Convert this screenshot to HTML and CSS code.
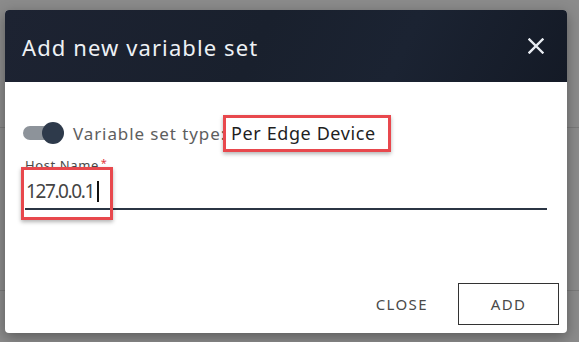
FILE: index.html
```html
<!DOCTYPE html>
<html lang="en">
<head>
    <meta charset="UTF-8">
    <meta name="viewport" content="width=device-width, initial-scale=1.0">
    <title>Add new variable set</title>
    <link rel="stylesheet" href="styles.css">
</head>
<body>

    <!-- Page derrière le voile -->
    <div class="backdrop">
        <div class="bg-line bg-line-top"></div>
        <div class="bg-line bg-line-bottom"></div>
    </div>

    <div class="dialog">
        <div class="dialog-header">
            <h2 class="dialog-title">Add new variable set</h2>
            <button class="close-btn" aria-label="Close">
                <svg width="16" height="16" viewBox="0 0 16 16">
                    <path d="M1.5 1.5 L14.5 14.5 M14.5 1.5 L1.5 14.5" stroke="#e8ecf2" stroke-width="2.4" stroke-linecap="square"/>
                </svg>
            </button>
        </div>

        <div class="dialog-body">
            <div class="type-row">
                <span class="toggle"><span class="toggle-knob"></span></span>
                <span class="type-label">Variable set type:</span>
                <span class="type-value">Per Edge Device</span>
            </div>

            <div class="field">
                <label class="field-label">Host Name<span class="required">*</span></label>
                <div class="field-input">127.0.0.1<span class="caret"></span></div>
                <div class="highlight-box"></div>
            </div>
        </div>

        <div class="dialog-actions">
            <button class="btn btn-text">CLOSE</button>
            <button class="btn btn-outline">ADD</button>
        </div>
    </div>

</body>
</html>
```

FILE: styles.css
```css
/* Style de la page */
body {
    margin: 0;
    padding: 0;
    background-color: #8b8b8b;
    font-family: "Noto Sans", "Open Sans", sans-serif;
    height: 342px;
    overflow: hidden;
    position: relative;
}

.backdrop {
    position: absolute;
    inset: 0;
}

.bg-line {
    position: absolute;
    left: 0;
    right: 0;
    height: 1px;
    background-color: #7a7a7a;
}

.bg-line-top {
    top: 127px;
}

.bg-line-bottom {
    top: 290px;
}

/* Fenêtre de dialogue */
.dialog {
    position: relative;
    margin: 10px 12px 0 5px;
    height: 323px;
    background-color: #fff;
    border-radius: 4px;
    box-shadow: 0 4px 14px rgba(0, 0, 0, 0.35);
    display: flex;
    flex-direction: column;
    overflow: hidden;
}

.dialog-header {
    height: 72px;
    background: linear-gradient(115deg, #1d2332 0%, #19202d 45%, #1b2332 70%, #141a26 100%);
    display: flex;
    align-items: center;
    justify-content: space-between;
    padding: 0 22px 0 17px;
    flex-shrink: 0;
}

.dialog-title {
    margin: 0;
    margin-top: 2px;
    font-size: 22px;
    font-weight: 400;
    color: #eef1f5;
    letter-spacing: 1.1px;
}

.close-btn {
    background: none;
    border: none;
    padding: 0;
    width: 18px;
    height: 18px;
    display: flex;
    align-items: center;
    justify-content: center;
    cursor: pointer;
}

/* Contenu */
.dialog-body {
    padding: 40px 20px 0 18px;
    flex: 1;
}

.type-row {
    display: flex;
    align-items: center;
    height: 22px;
}

.toggle {
    position: relative;
    width: 32px;
    height: 14px;
    border-radius: 7px;
    background-color: #8d939a;
}

.toggle-knob {
    position: absolute;
    right: -9px;
    top: -4px;
    width: 22px;
    height: 22px;
    border-radius: 50%;
    background-color: #2e3a4b;
}

.type-label {
    margin-left: 18px;
    font-size: 17px;
    color: #5e5e5e;
    letter-spacing: 0.9px;
}

.type-value {
    margin-left: -3px;
    padding: 3px 12px 4px 5px;
    font-size: 18px;
    color: #1f1f1f;
    letter-spacing: 0.6px;
    border: 3px solid #e8484d;
    box-shadow: 0 2px 4px rgba(0, 0, 0, 0.3);
}

.field {
    position: relative;
    margin-top: 12px;
    margin-left: 2px;
}

.field-label {
    display: block;
    font-size: 13px;
    color: #4a4a4a;
    line-height: 14px;
    letter-spacing: 0.6px;
}

.required {
    color: #e0393e;
    margin-left: 2px;
    vertical-align: 3px;
    font-size: 11px;
}

.field-input {
    margin-top: 3px;
    padding: 4px 0 5px 1px;
    font-size: 19px;
    color: #444;
    line-height: 24px;
    letter-spacing: -1.4px;
    border-bottom: 2px solid #2b3544;
}

.caret {
    display: inline-block;
    width: 2px;
    height: 21px;
    margin-left: 3px;
    vertical-align: -4px;
    background-color: #111;
}

.highlight-box {
    position: absolute;
    left: -4px;
    top: 11px;
    width: 86px;
    height: 47px;
    border: 3px solid #e8484d;
    box-shadow: 0 2px 4px rgba(0, 0, 0, 0.3);
}

/* Boutons */
.dialog-actions {
    display: flex;
    justify-content: flex-end;
    align-items: center;
    gap: 14px;
    padding: 0 8px 8px 0;
}

.btn {
    font-family: "Noto Sans", "Open Sans", sans-serif;
    font-size: 15px;
    color: #4a4a4a;
    background: none;
    cursor: pointer;
    letter-spacing: 1.4px;
}

.btn-text {
    border: none;
    padding: 10px 16px;
}

.btn-outline {
    width: 101px;
    height: 42px;
    border: 1.5px solid #333;
}
```
